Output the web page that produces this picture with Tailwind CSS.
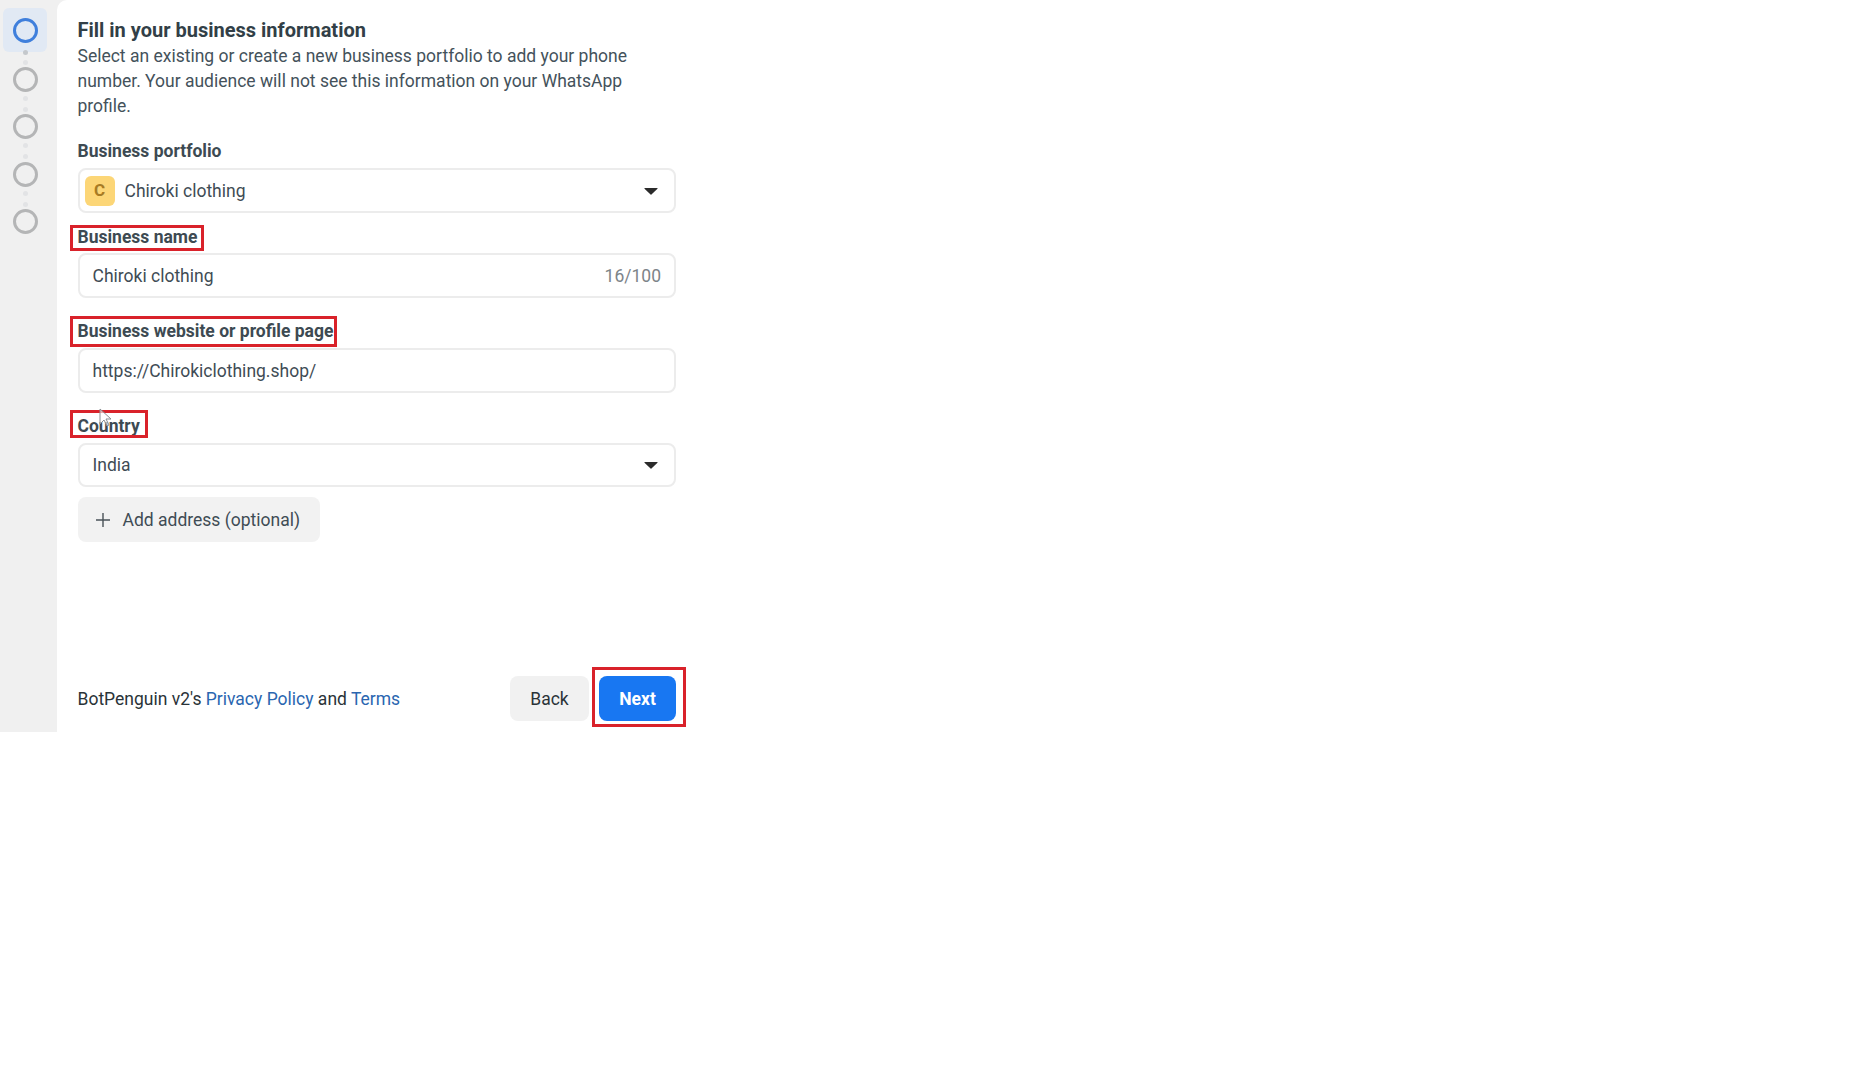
<!DOCTYPE html>
<html>
<head>
<meta charset="utf-8">
<script src="https://cdn.jsdelivr.net/npm/@tailwindcss/browser@4"></script>
</head>
<body class="bg-white font-['Roboto',sans-serif] text-[#1c2b33]">
<div class="relative flex h-[732px] w-[1866px] bg-[#f0f0f0]">
  <aside class="flex w-[57px] shrink-0 flex-col items-start pl-[3px] pt-[8px]">
    <div class="flex size-[44px] items-center justify-center rounded-[6px] bg-[#e1e9f4]">
      <span class="size-[25px] rounded-full border-[3px] border-[#3f7fdc]"></span>
    </div>
    <div class="flex w-[44px] flex-col items-center">
      <span class="mt-[-2px] size-[5px] rounded-full bg-[#c4c8cc]"></span>
      <span class="mt-[5px] size-[5px] rounded-full bg-[#e2e3e5]"></span>
      <span class="mt-[2px] size-[25px] rounded-full border-[3px] border-[#b4b5b6]"></span>
      <span class="mt-[4px] size-[5px] rounded-full bg-[#e2e3e5]"></span>
      <span class="mt-[6px] size-[5px] rounded-full bg-[#e2e3e5]"></span>
      <span class="mt-[2px] size-[25px] rounded-full border-[3px] border-[#b4b5b6]"></span>
      <span class="mt-[4px] size-[5px] rounded-full bg-[#e2e3e5]"></span>
      <span class="mt-[6px] size-[5px] rounded-full bg-[#e2e3e5]"></span>
      <span class="mt-[3px] size-[25px] rounded-full border-[3px] border-[#b4b5b6]"></span>
      <span class="mt-[4px] size-[5px] rounded-full bg-[#e2e3e5]"></span>
      <span class="mt-[6px] size-[5px] rounded-full bg-[#e2e3e5]"></span>
      <span class="mt-[2px] size-[25px] rounded-full border-[3px] border-[#b4b5b6]"></span>
    </div>
  </aside>
  <main class="flex w-full flex-col rounded-tl-[10px] bg-white pl-[20.5px] pt-[18px]">
    <div class="flex w-[598.5px] flex-col">
      <h1 class="h-[24px] text-[20px] font-bold leading-[24px] text-[#323f47]">Fill in your business information</h1>
      <p class="mt-[2px] w-[598px] text-[17.5px] leading-[25px] text-[#44525b]">Select an existing or create a new business portfolio to add your phone number. Your audience will not see this information on your WhatsApp profile.</p>

      <label class="mt-[20px] h-[24px] text-[17.5px] font-bold leading-[24px] text-[#3d4a52]">Business portfolio</label>
      <div class="mt-[5px] flex h-[45px] items-center justify-between rounded-[8px] border-2 border-[#ececec] pl-[5px] pr-[16px]">
        <div class="flex items-center gap-[10px]">
          <span class="flex size-[30px] items-center justify-center rounded-[6px] bg-[#fcd677] text-[17px] font-bold text-[#a87b24]">C</span>
          <span class="pt-[1px] text-[17.5px] text-[#3f4c55]">Chiroki clothing</span>
        </div>
        <svg width="14" height="8" viewBox="0 0 16 9"><path d="M1 1h14a.6.6 0 0 1 .4 1L8.5 8.6a.7.7 0 0 1-1 0L.6 2A.6.6 0 0 1 1 1z" fill="#2b2b2b"/></svg>
      </div>

      <label class="relative mt-[11px] h-[24px] w-fit pt-[1px] text-[17.5px] font-bold leading-[24px] text-[#3d4a52]">Business name
        <span class="absolute left-[-8px] right-[-7px] top-[1px] h-[26px] border-[3px] border-[#d9222a]"></span>
      </label>
      <div class="mt-[5px] flex h-[45px] items-center justify-between rounded-[8px] border-2 border-[#ececec] px-[13px]">
        <span class="pt-[1px] text-[17.5px] text-[#3f4c55]">Chiroki clothing</span>
        <span class="pt-[1px] text-[17.5px] text-[#7d8489]">16/100</span>
      </div>

      <label class="relative mt-[20px] h-[24px] w-fit pt-[1px] text-[17.5px] font-bold leading-[24px] text-[#3d4a52]">Business website or profile page
        <span class="absolute left-[-8px] right-[-4px] top-[-2px] h-[31px] border-[3px] border-[#d9222a]"></span>
      </label>
      <div class="mt-[6px] flex h-[45px] items-center rounded-[8px] border-2 border-[#ececec] px-[13px]">
        <span class="pt-[1px] text-[17.5px] text-[#3f4c55]">https://Chirokiclothing.shop/</span>
      </div>

      <label class="relative mt-[21px] h-[24px] w-fit text-[17.5px] font-bold leading-[24px] text-[#3d4a52]">Country
        <span class="absolute left-[-8px] right-[-8px] top-[-4px] h-[28px] border-[3px] border-[#d9222a]"></span>
      </label>
      <div class="mt-[5px] flex h-[44px] items-center justify-between rounded-[8px] border-2 border-[#ececec] pl-[13px] pr-[16px]">
        <span class="text-[17.5px] text-[#3f4c55]">India</span>
        <svg width="14" height="8" viewBox="0 0 16 9"><path d="M1 1h14a.6.6 0 0 1 .4 1L8.5 8.6a.7.7 0 0 1-1 0L.6 2A.6.6 0 0 1 1 1z" fill="#2b2b2b"/></svg>
      </div>

      <div class="mt-[10px] flex h-[45px] w-[242px] items-center rounded-[8px] bg-[#f2f2f2] pl-[18px]">
        <svg width="14" height="14" viewBox="0 0 14 14"><path d="M7 0v14M0 7h14" stroke="#4a5359" stroke-width="1.4" fill="none"/></svg>
        <span class="ml-[13px] pt-[1px] text-[17.5px] text-[#3f4c55]">Add address (optional)</span>
      </div>

      <div class="mt-[134px] flex h-[45px] items-center justify-between">
        <p class="pt-[1px] text-[17.5px] text-[#2a3338]">BotPenguin v2's <a class="text-[#2a66b0]">Privacy Policy</a> and <a class="text-[#2a66b0]">Terms</a></p>
        <div class="flex gap-[10px]">
          <button class="h-[45px] w-[79px] rounded-[8px] bg-[#f1f1f1] pt-[1px] text-[17.5px] text-[#2a3338]">Back</button>
          <span class="relative flex">
            <button class="h-[45px] w-[77px] rounded-[8px] bg-[#1877f2] pt-[1px] text-[17.5px] font-bold text-white">Next</button>
            <span class="absolute left-[-7px] right-[-10px] top-[-9px] bottom-[-6px] border-[3px] border-[#d9222a]"></span>
          </span>
        </div>
      </div>
    </div>
  </main>
  <svg class="absolute left-[99px] top-[408px]" width="14" height="20" viewBox="0 0 14 20"><path d="M1 1v15l4-4 3 6 2-1-3-6h5z" fill="#ffffff" fill-opacity="0.6" stroke="#8a8f93" stroke-width="1"/></svg>
</div>
</body>
</html>
